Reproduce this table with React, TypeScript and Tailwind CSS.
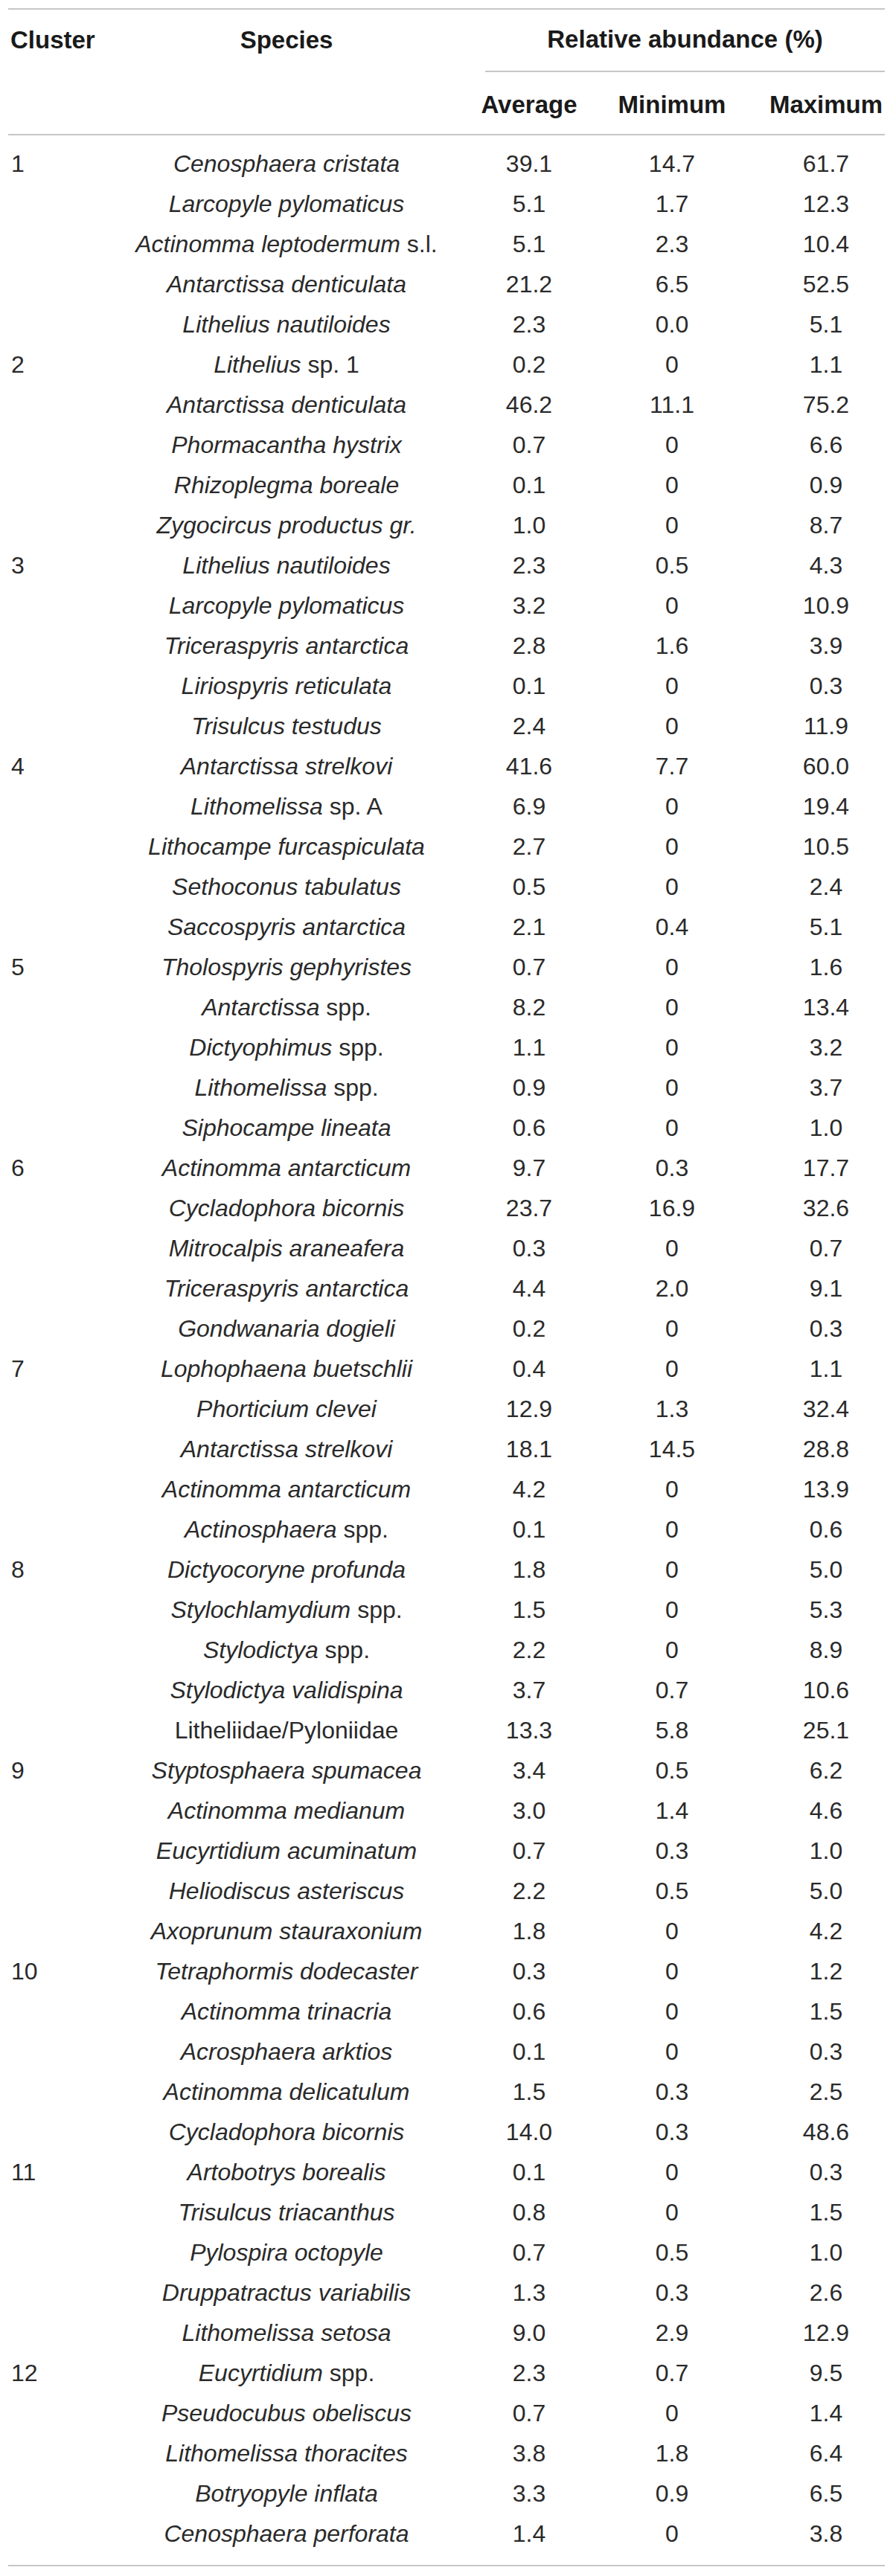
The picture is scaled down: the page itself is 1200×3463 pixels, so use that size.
type Row = {
  cluster?: string;
  name: string;
  note?: string;
  roman?: boolean;
  avg: string;
  min: string;
  max: string;
};

const r = (
  cluster: string | undefined,
  name: string,
  avg: string,
  min: string,
  max: string,
  note?: string,
  roman?: boolean
): Row => ({ cluster, name, avg, min, max, note, roman });

const rows: Row[] = [
  r("1", "Cenosphaera cristata", "39.1", "14.7", "61.7"),
  r(undefined, "Larcopyle pylomaticus", "5.1", "1.7", "12.3"),
  r(undefined, "Actinomma leptodermum", "5.1", "2.3", "10.4", "s.l."),
  r(undefined, "Antarctissa denticulata", "21.2", "6.5", "52.5"),
  r(undefined, "Lithelius nautiloides", "2.3", "0.0", "5.1"),
  r("2", "Lithelius", "0.2", "0", "1.1", "sp. 1"),
  r(undefined, "Antarctissa denticulata", "46.2", "11.1", "75.2"),
  r(undefined, "Phormacantha hystrix", "0.7", "0", "6.6"),
  r(undefined, "Rhizoplegma boreale", "0.1", "0", "0.9"),
  r(undefined, "Zygocircus productus gr.", "1.0", "0", "8.7"),
  r("3", "Lithelius nautiloides", "2.3", "0.5", "4.3"),
  r(undefined, "Larcopyle pylomaticus", "3.2", "0", "10.9"),
  r(undefined, "Triceraspyris antarctica", "2.8", "1.6", "3.9"),
  r(undefined, "Liriospyris reticulata", "0.1", "0", "0.3"),
  r(undefined, "Trisulcus testudus", "2.4", "0", "11.9"),
  r("4", "Antarctissa strelkovi", "41.6", "7.7", "60.0"),
  r(undefined, "Lithomelissa", "6.9", "0", "19.4", "sp. A"),
  r(undefined, "Lithocampe furcaspiculata", "2.7", "0", "10.5"),
  r(undefined, "Sethoconus tabulatus", "0.5", "0", "2.4"),
  r(undefined, "Saccospyris antarctica", "2.1", "0.4", "5.1"),
  r("5", "Tholospyris gephyristes", "0.7", "0", "1.6"),
  r(undefined, "Antarctissa", "8.2", "0", "13.4", "spp."),
  r(undefined, "Dictyophimus", "1.1", "0", "3.2", "spp."),
  r(undefined, "Lithomelissa", "0.9", "0", "3.7", "spp."),
  r(undefined, "Siphocampe lineata", "0.6", "0", "1.0"),
  r("6", "Actinomma antarcticum", "9.7", "0.3", "17.7"),
  r(undefined, "Cycladophora bicornis", "23.7", "16.9", "32.6"),
  r(undefined, "Mitrocalpis araneafera", "0.3", "0", "0.7"),
  r(undefined, "Triceraspyris antarctica", "4.4", "2.0", "9.1"),
  r(undefined, "Gondwanaria dogieli", "0.2", "0", "0.3"),
  r("7", "Lophophaena buetschlii", "0.4", "0", "1.1"),
  r(undefined, "Phorticium clevei", "12.9", "1.3", "32.4"),
  r(undefined, "Antarctissa strelkovi", "18.1", "14.5", "28.8"),
  r(undefined, "Actinomma antarcticum", "4.2", "0", "13.9"),
  r(undefined, "Actinosphaera", "0.1", "0", "0.6", "spp."),
  r("8", "Dictyocoryne profunda", "1.8", "0", "5.0"),
  r(undefined, "Stylochlamydium", "1.5", "0", "5.3", "spp."),
  r(undefined, "Stylodictya", "2.2", "0", "8.9", "spp."),
  r(undefined, "Stylodictya validispina", "3.7", "0.7", "10.6"),
  r(undefined, "Litheliidae/Pyloniidae", "13.3", "5.8", "25.1", undefined, true),
  r("9", "Styptosphaera spumacea", "3.4", "0.5", "6.2"),
  r(undefined, "Actinomma medianum", "3.0", "1.4", "4.6"),
  r(undefined, "Eucyrtidium acuminatum", "0.7", "0.3", "1.0"),
  r(undefined, "Heliodiscus asteriscus", "2.2", "0.5", "5.0"),
  r(undefined, "Axoprunum stauraxonium", "1.8", "0", "4.2"),
  r("10", "Tetraphormis dodecaster", "0.3", "0", "1.2"),
  r(undefined, "Actinomma trinacria", "0.6", "0", "1.5"),
  r(undefined, "Acrosphaera arktios", "0.1", "0", "0.3"),
  r(undefined, "Actinomma delicatulum", "1.5", "0.3", "2.5"),
  r(undefined, "Cycladophora bicornis", "14.0", "0.3", "48.6"),
  r("11", "Artobotrys borealis", "0.1", "0", "0.3"),
  r(undefined, "Trisulcus triacanthus", "0.8", "0", "1.5"),
  r(undefined, "Pylospira octopyle", "0.7", "0.5", "1.0"),
  r(undefined, "Druppatractus variabilis", "1.3", "0.3", "2.6"),
  r(undefined, "Lithomelissa setosa", "9.0", "2.9", "12.9"),
  r("12", "Eucyrtidium", "2.3", "0.7", "9.5", "spp."),
  r(undefined, "Pseudocubus obeliscus", "0.7", "0", "1.4"),
  r(undefined, "Lithomelissa thoracites", "3.8", "1.8", "6.4"),
  r(undefined, "Botryopyle inflata", "3.3", "0.9", "6.5"),
  r(undefined, "Cenosphaera perforata", "1.4", "0", "3.8"),
];

const cols = "grid grid-cols-[112px_524px_128px_256px_158px]";

export default function App() {
  return (
    <div className="min-h-[3463px] bg-white px-[11px] pt-[11px] font-['Liberation_Sans',Arial,sans-serif] text-[32px] text-[#2a2a2a]">
      <div className="border-t-2 border-[#c6c6c6]">
        {/* header */}
        <div className={`${cols} text-[33px] font-bold text-[#1a1a1a]`}>
          <div className="flex h-[84px] items-center pb-[2px] pl-[3px]">Cluster</div>
          <div className="flex h-[84px] items-center justify-center pb-[2px]">Species</div>
          <div className="col-span-3 ml-[5px] flex h-[84px] items-center justify-center border-b-2 border-[#c6c6c6] pb-[2px]">
            Relative abundance (%)
          </div>
        </div>
        <div className={`${cols} border-b-2 border-[#c6c6c6] text-[33px] font-bold text-[#1a1a1a]`}>
          <div />
          <div />
          <div className="flex h-[83px] items-center justify-center pt-[4px]">Average</div>
          <div className="flex h-[83px] items-center justify-center pt-[4px]">Minimum</div>
          <div className="flex h-[83px] items-center justify-center pt-[4px]">Maximum</div>
        </div>

        {/* body */}
        <div className="border-b-2 border-[#c6c6c6] pb-[15px] pt-[11px]">
          {rows.map((row, i) => (
            <div key={i} className={`${cols} h-[54px] items-center`}>
              <div className="pl-[4px]">{row.cluster ?? ""}</div>
              <div className="text-center">
                {row.roman ? (
                  row.name
                ) : (
                  <>
                    <span className="italic">{row.name}</span>
                    {row.note ? ` ${row.note}` : null}
                  </>
                )}
              </div>
              <div className="text-center">{row.avg}</div>
              <div className="text-center">{row.min}</div>
              <div className="text-center">{row.max}</div>
            </div>
          ))}
        </div>
      </div>
    </div>
  );
}
